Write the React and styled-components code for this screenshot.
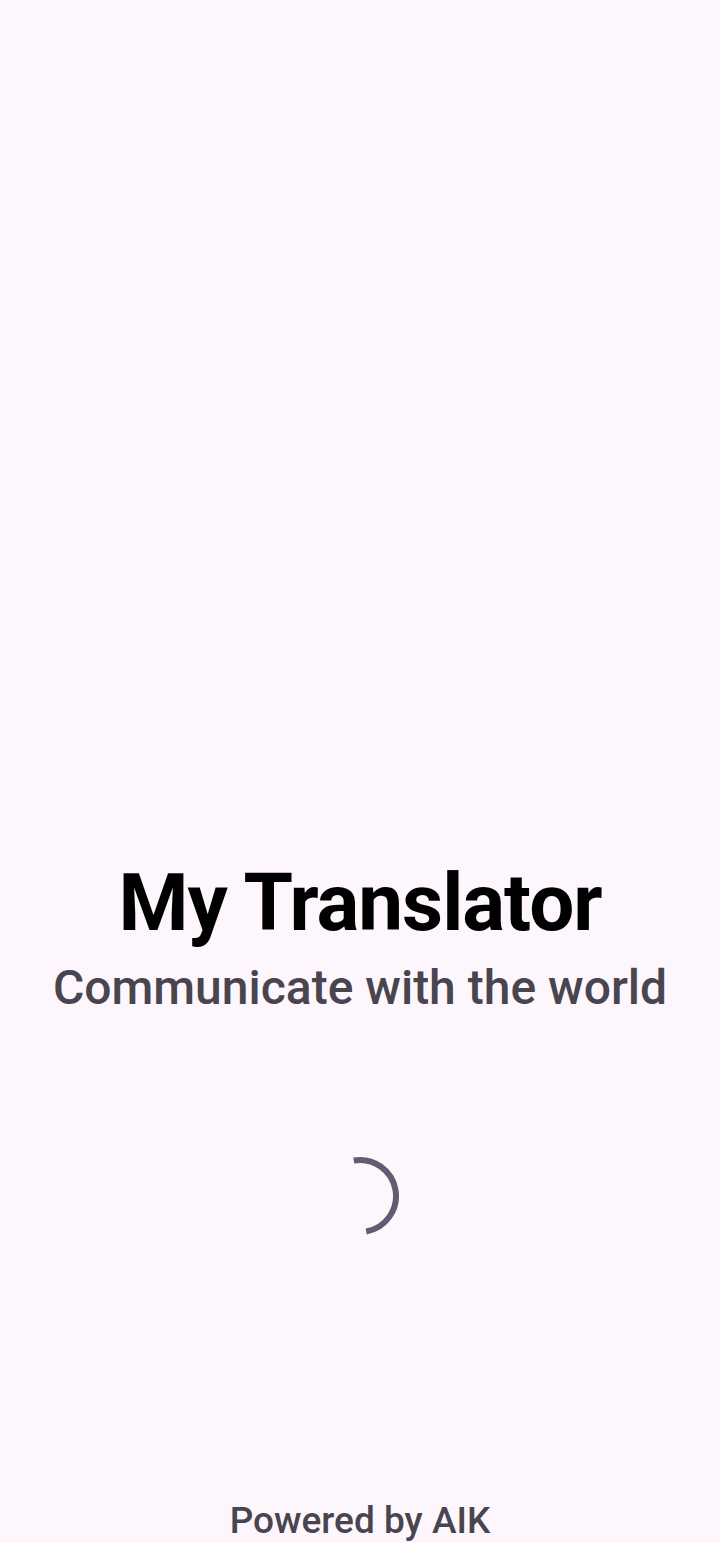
import React from 'react'
import styled, { createGlobalStyle } from 'styled-components'

const GlobalStyle = createGlobalStyle`
  html, body {
    margin: 0;
    padding: 0;
    background: #fdf7fd;
  }
  body {
    font-family: Roboto, "Noto Sans", sans-serif;
  }
`

const App = () => {
  return (
    <>
      <GlobalStyle />
      <Screen>
        <Brand>
          <Title>My Translator</Title>
          <Tagline>Communicate with the world</Tagline>
        </Brand>
        <LoaderBox>
          <Spinner viewBox="0 0 80 80">
            <circle
              cx="40"
              cy="40"
              r="36"
              fill="none"
              stroke="#625b71"
              strokeWidth="6"
              strokeDasharray="113 300"
              transform="rotate(-100 40 40)"
            />
          </Spinner>
        </LoaderBox>
        <Footer>Powered by AIK</Footer>
      </Screen>
    </>
  )
}

export default App

const Screen = styled.div`
  height: 1543px;
  display: flex;
  flex-direction: column;
  align-items: center;
  box-sizing: border-box;
  padding-top: 855px;
`

const Brand = styled.div`
  display: flex;
  flex-direction: column;
  align-items: center;
`

const Title = styled.h1`
  margin: 0;
  font-size: 80px;
  font-weight: 700;
  line-height: 97px;
  letter-spacing: -1px;
  color: #000;
`

const Tagline = styled.p`
  margin: 6px 0 0;
  font-size: 48px;
  font-weight: 500;
  line-height: 60px;
  color: #49454f;
`

const LoaderBox = styled.div`
  margin-top: 138px;
  display: flex;
  justify-content: center;
`

const Spinner = styled.svg`
  width: 80px;
  height: 80px;
`

const Footer = styled.div`
  margin-top: auto;
  font-size: 37px;
  font-weight: 500;
  line-height: 44px;
  color: #49454f;
`
